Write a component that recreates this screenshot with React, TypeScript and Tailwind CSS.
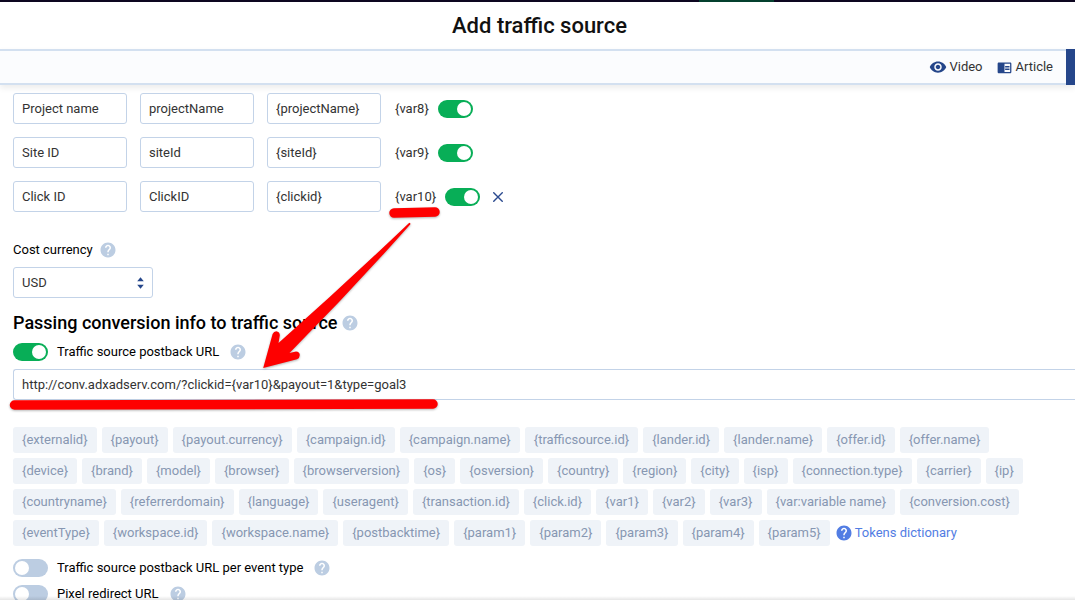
import { MdChromeReaderMode, MdHelp, MdVisibility } from "react-icons/md";

const params = [
  { name: "Project name", param: "projectName", token: "{projectName}", variable: "{var8}" },
  { name: "Site ID", param: "siteId", token: "{siteId}", variable: "{var9}" },
  { name: "Click ID", param: "ClickID", token: "{clickid}", variable: "{var10}", removable: true },
];

const tokens = [
  "externalid", "payout", "payout.currency", "campaign.id", "campaign.name", "trafficsource.id",
  "lander.id", "lander.name", "offer.id", "offer.name", "device", "brand", "model", "browser",
  "browserversion", "os", "osversion", "country", "region", "city", "isp", "connection.type",
  "carrier", "ip", "countryname", "referrerdomain", "language", "useragent", "transaction.id",
  "click.id", "var1", "var2", "var3", "var:variable name", "conversion.cost", "eventType",
  "workspace.id", "workspace.name", "postbacktime", "param1", "param2", "param3", "param4", "param5",
];

const fieldClass =
  "h-[31px] rounded-[3px] border border-[#c3d3e8] bg-white px-2 text-[13px] text-[#333] outline-none";

function Switch({ id, on = false }: { id: string; on?: boolean }) {
  return (
    <input
      id={id}
      type="checkbox"
      role="switch"
      defaultChecked={on}
      className="flex h-[18px] w-[35px] shrink-0 cursor-pointer appearance-none items-center justify-start rounded-full bg-[#bccde2] p-[2px] before:block before:size-[14px] before:rounded-full before:bg-white before:content-[''] checked:justify-end checked:bg-[#08ae57]"
    />
  );
}

function Help() {
  return (
    <button type="button" aria-label="Help" className="text-[#bccde2]">
      <MdHelp className="block size-[18px]" />
    </button>
  );
}

function CloseIcon() {
  return (
    <svg viewBox="0 0 10 10" className="block size-[10px]" aria-hidden="true">
      <path d="M0.3 0.3 L9.7 9.7 M9.7 0.3 L0.3 9.7" stroke="#2b4a8f" strokeWidth="1.4" fill="none" />
    </svg>
  );
}

function SelectArrows() {
  return (
    <svg
      viewBox="0 0 7 12"
      className="pointer-events-none absolute top-[10px] right-[9px] h-3 w-[7px]"
      aria-hidden="true"
    >
      <path d="M0.2 4.3 L3.5 0.3 L6.8 4.3 Z M0.2 7.7 L3.5 11.7 L6.8 7.7 Z" fill="#25468a" />
    </svg>
  );
}

function Annotations() {
  return (
    <svg
      viewBox="0 0 450 420"
      className="pointer-events-none absolute top-0 left-0 h-[420px] w-[450px] drop-shadow-[0_1px_1px_rgba(0,0,0,0.3)]"
      aria-hidden="true"
    >
      <path d="M394 213 L435 212" stroke="#fe0000" strokeWidth="9.5" strokeLinecap="round" />
      <path d="M14.5 405 L433 404" stroke="#fe0000" strokeWidth="9.5" strokeLinecap="round" />
      <path
        fill="#fe0000"
        d="M409.3 222.7 Q411 223.2 410.2 224.6 Q352 290 289.5 353 L296 351.6 Q299.6 352 299.8 355 Q299.8 358 297 359.3 L263.2 368 L272.6 334 Q274 331 277 331.4 Q280 332.3 279.8 335.5 L278.5 343 Q344 285 409.3 222.7 Z"
      />
    </svg>
  );
}

export default function App() {
  return (
    <div className="relative flex h-screen flex-col overflow-hidden bg-white font-[Roboto,sans-serif] text-[13px] leading-5 text-[#333]">
      <div className="flex h-[2px] shrink-0 bg-[#0d0620]">
        <div className="ml-[65%] w-[7%] bg-[#04402e]" />
      </div>

      <header className="flex h-[47px] shrink-0 items-center justify-center pl-1">
        <h1 className="text-[22px] leading-7 font-medium text-[#111]">Add traffic source</h1>
      </header>

      <nav className="flex h-9 shrink-0 justify-end border-y-2 border-[#d3e0f0] bg-[#fbfcfe] shadow-[0_3px_6px_rgba(0,0,0,0.08)]">
        <div className="flex items-center gap-[14px] pr-[13px]">
          <a href="#video" className="flex items-center gap-[2px]">
            <MdVisibility className="size-[18px] text-[#25468a]" />
            Video
          </a>
          <a href="#article" className="flex items-center gap-1">
            <MdChromeReaderMode className="size-[15px] text-[#25468a]" />
            Article
          </a>
        </div>
        <div className="-my-[2px] w-[9px] bg-[#25468a]" />
      </nav>

      <main className="shrink-0 pt-2 pl-[13px]">
        <div className="flex flex-col gap-[13px]">
          {params.map((p) => (
            <div key={p.param} className="flex items-center">
              <div className="flex gap-[13px]">
                <input aria-label="Name" defaultValue={p.name} className={`${fieldClass} w-[114px]`} />
                <input aria-label="Parameter" defaultValue={p.param} className={`${fieldClass} w-[114px]`} />
                <input aria-label="Token" defaultValue={p.token} className={`${fieldClass} w-[114px]`} />
              </div>
              <label htmlFor={p.param} className="mr-[9px] ml-[14px]">{p.variable}</label>
              <Switch id={p.param} on />
              {p.removable && (
                <button type="button" aria-label="Remove" className="ml-[13px]">
                  <CloseIcon />
                </button>
              )}
            </div>
          ))}
        </div>

        <div className="mt-7 flex items-center gap-[6px]">
          <label htmlFor="currency" className="text-black">Cost currency</label>
          <Help />
        </div>
        <div className="relative mt-[7px] w-[140px]">
          <select id="currency" defaultValue="USD" className={`${fieldClass} w-full appearance-none`}>
            <option>USD</option>
            <option>EUR</option>
          </select>
          <SelectArrows />
        </div>

        <div className="mt-[13px] flex items-center gap-1">
          <h2 className="text-lg leading-6 font-medium text-black">Passing conversion info to traffic source</h2>
          <Help />
        </div>

        <div className="mt-[7px] flex items-center">
          <Switch id="postback" on />
          <label htmlFor="postback" className="mr-[10px] ml-[9px] text-black">Traffic source postback URL</label>
          <Help />
        </div>
        <input
          aria-label="Postback URL"
          defaultValue="http://conv.adxadserv.com/?clickid={var10}&payout=1&type=goal3"
          className={`${fieldClass} mt-[7px] block w-full rounded-r-none border-r-0`}
        />

        <div className="mt-[27px] flex flex-wrap gap-[5px] pr-10">
          {tokens.map((t) => (
            <button key={t} type="button" className="h-[26px] rounded-[3px] bg-[#eff3f8] px-[9px] text-[#8797b2]">
              {`{${t}}`}
            </button>
          ))}
          <a href="#tokens" className="flex items-center gap-[2px] text-[#527de3]">
            <MdHelp className="size-[18px]" />
            Tokens dictionary
          </a>
        </div>

        <div className="mt-3 flex items-center">
          <Switch id="per-event" />
          <label htmlFor="per-event" className="mr-[10px] ml-[9px] text-black">
            Traffic source postback URL per event type
          </label>
          <Help />
        </div>
        <div className="mt-[6px] flex items-center">
          <Switch id="pixel" />
          <label htmlFor="pixel" className="mr-[10px] ml-[9px] text-black">Pixel redirect URL</label>
          <Help />
        </div>
      </main>

      <Annotations />
      <div className="pointer-events-none absolute inset-x-0 bottom-0 h-1 bg-linear-to-b from-transparent to-black/10" />
    </div>
  );
}
